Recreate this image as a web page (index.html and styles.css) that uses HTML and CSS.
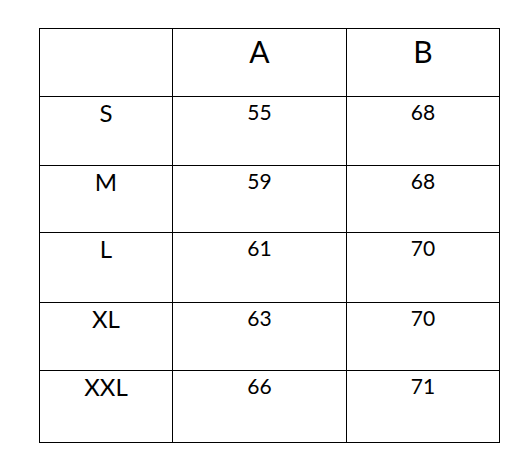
FILE: index.html
```html
<!DOCTYPE html>
<html lang="en">
<head>
<meta charset="utf-8">
<title>Size table</title>
<link rel="stylesheet" href="styles.css">
</head>
<body>
<div class="size-table" role="table">
  <div class="cell head"></div>
  <div class="cell head">A</div>
  <div class="cell head">B</div>

  <div class="cell label">S</div>
  <div class="cell num">55</div>
  <div class="cell num">68</div>

  <div class="cell label">M</div>
  <div class="cell num">59</div>
  <div class="cell num">68</div>

  <div class="cell label">L</div>
  <div class="cell num">61</div>
  <div class="cell num">70</div>

  <div class="cell label">XL</div>
  <div class="cell num">63</div>
  <div class="cell num">70</div>

  <div class="cell label">XXL</div>
  <div class="cell num">66</div>
  <div class="cell num">71</div>
</div>
</body>
</html>
```
FILE: styles.css
```css
html, body {
  margin: 0;
  padding: 0;
  background: #ffffff;
}

body {
  padding: 28px 0 0 39px;
  font-family: Lato, "Open Sans", "Liberation Sans", sans-serif;
  color: #000000;
}

.size-table {
  display: grid;
  grid-template-columns: 132px 173px 152px;
  grid-template-rows: 67px 68px 66px 69px 67px 71px;
  gap: 1px;
  padding: 1px;
  background: #000000;
  width: max-content;
}

.cell {
  background: #ffffff;
  text-align: center;
  line-height: 1;
}

.head {
  font-size: 30px;
  padding-top: 7px;
}

.label {
  font-size: 24px;
  padding-top: 4px;
}

.num {
  font-size: 21px;
  padding-top: 4px;
}
```
